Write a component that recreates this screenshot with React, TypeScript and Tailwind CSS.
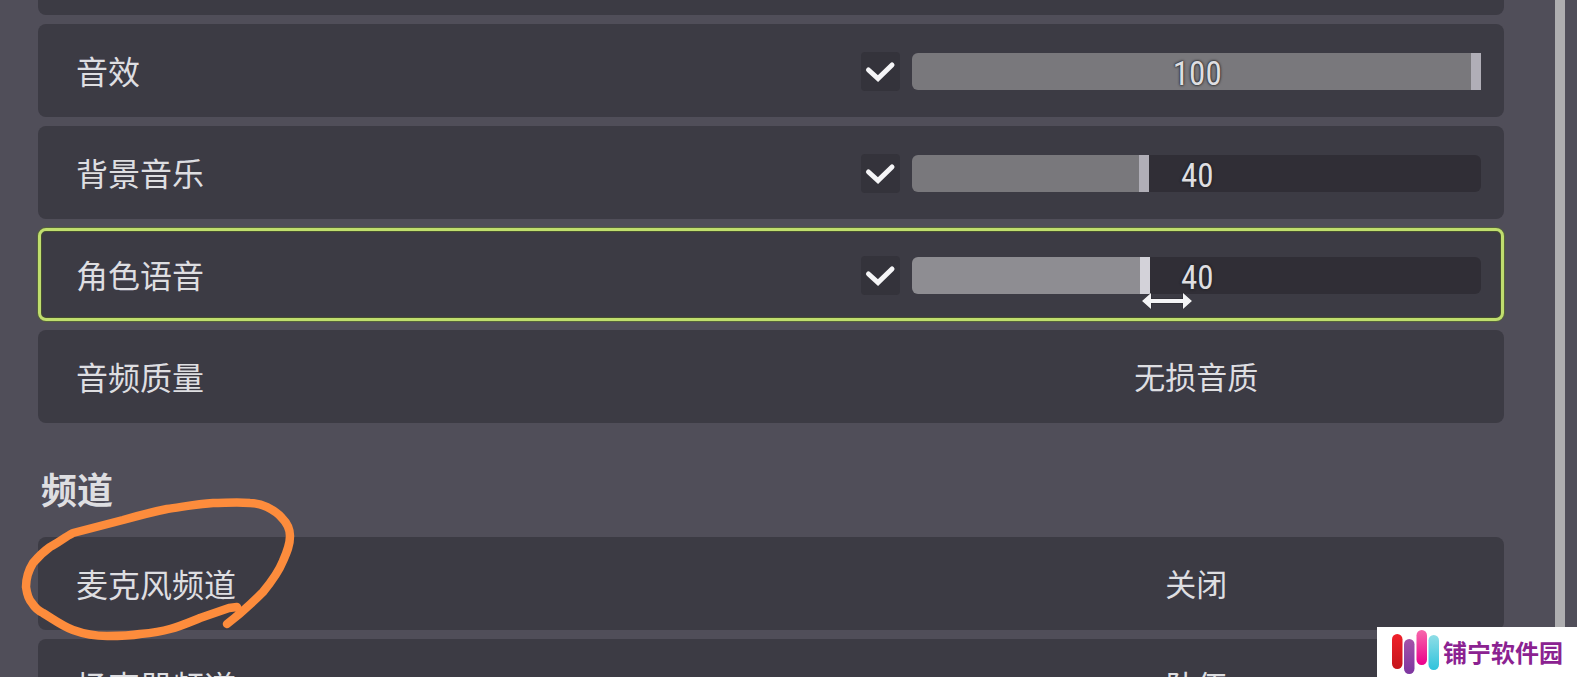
import React, { useState } from "react";
import clsx from "clsx";

type VolumeSetting = {
  id: string;
  label: string;
  level: number;
  active?: boolean;
};

const volumeSettings: VolumeSetting[] = [
  { id: "sfx", label: "音效", level: 100 },
  { id: "bgm", label: "背景音乐", level: 40.6 },
  { id: "voice", label: "角色语音", level: 40.9, active: true },
];

const ROW =
  "relative grid h-[93px] shrink-0 grid-cols-[772fr_39px_569fr] items-center gap-3 rounded-lg border-[3px] bg-[#3c3b44] pl-[35px] pr-5 pt-[2px]";

const ResizeCursor = () => (
  <svg className="pointer-events-none absolute left-[229px] top-[35px] h-[18px] w-[52px]" viewBox="0 0 52 18">
    <path
      d="M1 9 10 1V7H42V1L51 9 42 17V11H10V17Z"
      fill="#f4f4f6"
      stroke="#2b2a31"
      strokeWidth="1"
      paintOrder="stroke"
    />
  </svg>
);

const VolumeRow: React.FC<{ setting: VolumeSetting }> = ({ setting }) => {
  const [level, setLevel] = useState(setting.level);
  const [enabled, setEnabled] = useState(true);
  const fill = setting.active ? "#8e8d92" : "#79787c";

  return (
    <div
      className={clsx(
        ROW,
        setting.active ? "border-[#c0de6e] shadow-[0_0_0_1px_#55633a,inset_0_0_0_1px_#46502f]" : "border-transparent"
      )}
    >
      <label htmlFor={setting.id} className="pb-1 text-[32px] leading-10">
        {setting.label}
      </label>
      <div className="grid h-[39px] w-[39px]">
        <input
          type="checkbox"
          aria-label={`${setting.label}开关`}
          checked={enabled}
          onChange={(e) => setEnabled(e.target.checked)}
          className="col-start-1 row-start-1 h-full w-full appearance-none rounded-sm bg-[#34333b]"
        />
        {enabled && (
          <svg className="pointer-events-none col-start-1 row-start-1 h-full w-full" viewBox="0 0 39 39" fill="none">
            <path d="M7.5 18 17 26.5 31 13" stroke="#f5f5f7" strokeWidth="5" strokeLinecap="round" />
          </svg>
        )}
      </div>
      <div className="relative grid h-[37px]">
        <input
          id={setting.id}
          type="range"
          min={0}
          max={100}
          step="any"
          value={level}
          onChange={(e) => setLevel(Number(e.target.value))}
          className={clsx(
            "col-start-1 row-start-1 h-full w-full appearance-none bg-[#302e36] [&::-webkit-slider-thumb]:h-[37px] [&::-webkit-slider-thumb]:w-[10px] [&::-webkit-slider-thumb]:appearance-none",
            level === 100 ? "rounded-l-md" : "rounded-md",
            setting.active
              ? "[&::-webkit-slider-thumb]:bg-[#d3d2d9]"
              : "[&::-webkit-slider-thumb]:bg-[#b0aeb7]"
          )}
          style={{ backgroundImage: `linear-gradient(to right, ${fill} ${level}%, transparent ${level}%)` }}
        />
        <output
          htmlFor={setting.id}
          className="pointer-events-none col-start-1 row-start-1 self-center justify-self-center pl-[2px] pt-1 font-['Roboto_Condensed','Liberation_Sans_Narrow','Noto_Sans_CJK_SC',sans-serif] text-[33px] leading-8 [text-shadow:0_0_3px_#222,0_0_2px_#222]"
        >
          {Math.floor(level)}
        </output>
        {setting.active && <ResizeCursor />}
      </div>
    </div>
  );
};

const SelectRow: React.FC<{ id: string; label: string; value: string; children?: React.ReactNode }> = ({
  id,
  label,
  value,
  children,
}) => (
  <div className={clsx(ROW, "border-transparent")}>
    <label htmlFor={id} className="pb-1 text-[32px] leading-10">
      {label}
    </label>
    <select
      id={id}
      className="col-start-3 w-full appearance-none bg-transparent pb-1 text-[31px] leading-10 [text-align-last:center]"
    >
      <option>{value}</option>
    </select>
    {children}
  </div>
);

// hand drawn ring around the microphone channel
const MarkerRing = () => (
  <svg
    className="pointer-events-none absolute -left-[41px] -top-[50px] z-10 h-[156px] w-[300px]"
    viewBox="0 0 300 156"
    fill="none"
  >
    <path
      d="M227 134C240 124 252 113 263 102C272 91 279 81 283 71C287 62 290 55 290 46C290 38 287 33 282 28C277 22 273 20 267 17C261 14 256 13 250 13C237 12 225 13 213 13C197 14 182 17 167 19C152 22 137 26 123 30L73 43C65 47 58 53 50 57C43 62 38 67 33 73C28 81 26 88 26 97C27 104 28 109 32 113C35 118 39 121 43 123C53 129 62 136 73 140C84 144 95 146 107 146C118 146 129 146 140 144C151 143 160 142 170 139C181 136 190 132 200 128L229 118L237 117"
      stroke="#fd8c3c"
      strokeWidth="8.5"
      strokeLinecap="round"
      strokeLinejoin="round"
    />
  </svg>
);

const Watermark = () => (
  <div className="absolute bottom-0 right-0 z-20 flex h-[50px] w-[200px] items-center bg-white pl-[15px]">
    <svg className="h-[50px] w-[47px] shrink-0" viewBox="0 0 47 50">
      <defs>
        <linearGradient id="red" x2="0" y2="1">
          <stop stopColor="#f0202a" />
          <stop offset="1" stopColor="#c4161c" />
        </linearGradient>
        <linearGradient id="purple" x2="0" y2="1">
          <stop stopColor="#a453a8" />
          <stop offset="1" stopColor="#7d36a0" />
        </linearGradient>
        <linearGradient id="pink" x2="0" y2="1">
          <stop stopColor="#f768ab" />
          <stop offset="1" stopColor="#ec008c" />
        </linearGradient>
        <linearGradient id="cyan" x2="0" y2="1">
          <stop stopColor="#8fdde6" />
          <stop offset="1" stopColor="#2fc3dc" />
        </linearGradient>
      </defs>
      <rect x="0" y="7" width="10.5" height="35" rx="5.2" fill="url(#red)" />
      <rect x="12" y="12" width="10.5" height="35" rx="5.2" fill="url(#purple)" />
      <rect x="24.5" y="3" width="10.5" height="35" rx="5.2" fill="url(#pink)" />
      <rect x="36.5" y="8" width="10.5" height="35" rx="5.2" fill="url(#cyan)" />
    </svg>
    <span className="whitespace-nowrap pl-1 text-2xl font-bold text-[#8b2291]">铺宁软件园</span>
  </div>
);

const App: React.FC = () => {
  return (
    <div className="relative flex h-screen overflow-hidden bg-[#504e59] font-['Noto_Sans_CJK_SC',sans-serif] text-[#dedee1]">
      <main className="flex flex-1 flex-col gap-[9px] pl-[38px] pr-[51px]">
        <div className="h-[15px] shrink-0 rounded-b-lg bg-[#3c3b44]" />
        {volumeSettings.map((setting) => (
          <VolumeRow key={setting.id} setting={setting} />
        ))}
        <SelectRow id="quality" label="音频质量" value="无损音质" />
        <h2 className="shrink-0 pb-5 pl-[3px] pt-9 text-[36px] font-bold leading-10">频道</h2>
        <SelectRow id="mic" label="麦克风频道" value="关闭">
          <MarkerRing />
        </SelectRow>
        <SelectRow id="speaker" label="扬声器频道" value="队伍" />
      </main>
      <div className="mr-3 w-[10px] bg-[#aeaeb0]" />
      <Watermark />
    </div>
  );
};

export default App;
